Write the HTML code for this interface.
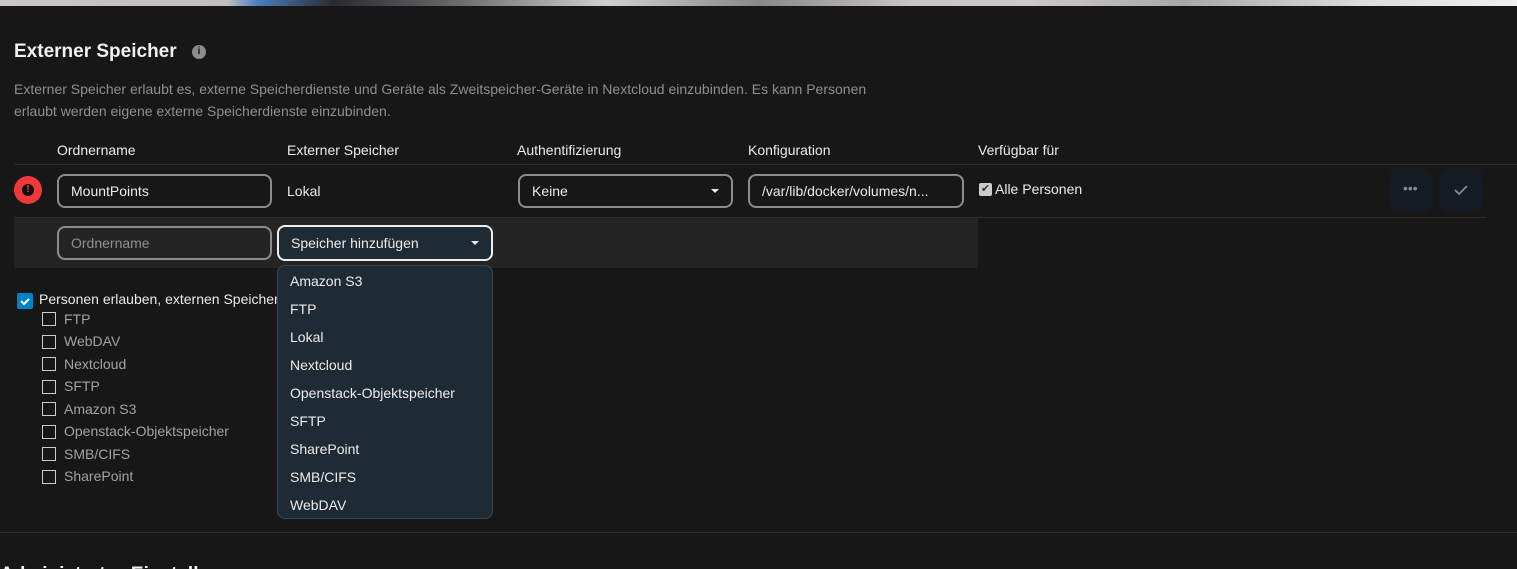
<!DOCTYPE html>
<html><head><meta charset="utf-8"><style>
*{box-sizing:border-box;margin:0;padding:0}
html,body{width:1517px;height:569px;overflow:hidden}
body{background:#171717;font-family:"Liberation Sans",sans-serif;color:#ebebeb;position:relative;font-size:14px}
.a{position:absolute;white-space:nowrap}
.top{left:0;top:0;width:1517px;height:6px;background:linear-gradient(90deg,#c8c6c6 0%,#c0bebe 15%,#4a7fc0 17%,#2a2a2e 22%,#6a6868 30%,#d0d0d0 40%,#888 50%,#c8c4c4 60%,#ccc8c8 68%,#a8a8a8 78%,#dcdcdc 90%,#f0f0f0 100%)}
.inp{position:absolute;height:34px;border:2px solid #8c8c8c;border-radius:8px;padding:0 12px;line-height:30px;font-size:14px;color:#ebebeb}
.caret{position:absolute;right:12px;top:13px;width:0;height:0;border-left:4px solid transparent;border-right:4px solid transparent;border-top:4px solid #ebebeb}
.hd{top:142px;font-size:14px;color:#ebebeb}
.cb{position:absolute;width:14px;height:14px;border:1px solid #ccc;left:42px}
.cl{position:absolute;left:64px;color:#a3a3a3;font-size:14px}
.dd{position:absolute;left:277px;top:265px;width:216px;height:254px;background:#1f2b34;border:1px solid #3a4650;border-radius:8px}
.dd div{position:absolute;left:12px;font-size:14px;color:#ebebeb}
.btn{position:absolute;top:168px;width:44px;height:44px;background:#141b22;border-radius:10px}
</style></head><body>
<div class="a top"></div>
<div class="a" style="left:14px;top:41px;font-size:19px;font-weight:bold;color:#f0f0f0">Externer Speicher</div>
<div class="a" style="left:192px;top:45px;width:14px;height:14px;border-radius:50%;background:#8c8c8c;color:#171717;font-size:10px;font-weight:bold;text-align:center;line-height:14px">i</div>
<div class="a" style="left:14px;top:78px;color:#8f8f8f;line-height:22px;font-size:14px;white-space:normal;width:880px">Externer Speicher erlaubt es, externe Speicherdienste und Geräte als Zweitspeicher-Geräte in Nextcloud einzubinden. Es kann Personen erlaubt werden eigene externe Speicherdienste einzubinden.</div>
<div class="a hd" style="left:57px">Ordnername</div>
<div class="a hd" style="left:287px">Externer Speicher</div>
<div class="a hd" style="left:517px">Authentifizierung</div>
<div class="a hd" style="left:748px">Konfiguration</div>
<div class="a hd" style="left:978px">Verfügbar für</div>
<div class="a" style="left:14px;top:164px;width:1503px;height:1px;background:#2e2e2e"></div>
<div class="a" style="left:14px;top:176px;width:28px;height:28px;border-radius:50%;background:#f0383b"></div>
<div class="a" style="left:22px;top:184px;width:12px;height:12px;border-radius:50%;background:#111;color:#f0383b;font-size:10px;font-weight:bold;text-align:center;line-height:12px">!</div>
<div class="inp" style="left:57px;top:174px;width:215px">MountPoints</div>
<div class="a" style="left:287px;top:183px">Lokal</div>
<div class="inp" style="left:518px;top:174px;width:215px">Keine<span class="caret"></span></div>
<div class="inp" style="left:748px;top:174px;width:216px">/var/lib/docker/volumes/n...</div>
<div class="a" style="left:979px;top:183px;width:13px;height:13px;background:#ccc;border-radius:2px;color:#333;font-size:11px;line-height:13px;text-align:center">✔</div>
<div class="a" style="left:995px;top:181px">Alle Personen</div>
<div class="btn" style="left:1389px"><span class="a" style="left:14px;top:12px;color:#8a8a8a;font-size:14px">•••</span></div>
<div class="btn" style="left:1439px"><svg class="a" style="left:14px;top:15px" width="16" height="14"><path d="M2 7l4 4 8-8" stroke="#8a8a8a" stroke-width="1.8" fill="none"/></svg></div>
<div class="a" style="left:14px;top:217px;width:1472px;height:1px;background:#2e2e2e"></div>
<div class="a" style="left:14px;top:218px;width:964px;height:50px;background:#242424"></div>
<div class="inp" style="left:57px;top:226px;width:215px;color:#8f8f8f">Ordnername</div>
<div class="inp" style="left:277px;top:225px;width:216px;height:36px;background:#1f2b34;border-color:#eee;line-height:32px">Speicher hinzufügen<span class="caret" style="top:14px"></span></div>
<div class="a" style="left:17px;top:293px;width:16px;height:16px;background:#0082c9;border-radius:2px"><svg width="16" height="16"><path d="M4 8l3 3 5-5" stroke="#fff" stroke-width="2" fill="none"/></svg></div>
<div class="a" style="left:39px;top:291px;width:238px;overflow:hidden">Personen erlauben, externen Speicher einzubinden</div>
<div class="cb" style="top:312px"></div><div class="cl a" style="top:311px">FTP</div>
<div class="cb" style="top:335px"></div><div class="cl a" style="top:333px">WebDAV</div>
<div class="cb" style="top:357px"></div><div class="cl a" style="top:356px">Nextcloud</div>
<div class="cb" style="top:380px"></div><div class="cl a" style="top:378px">SFTP</div>
<div class="cb" style="top:402px"></div><div class="cl a" style="top:401px">Amazon S3</div>
<div class="cb" style="top:425px"></div><div class="cl a" style="top:423px">Openstack-Objektspeicher</div>
<div class="cb" style="top:447px"></div><div class="cl a" style="top:446px">SMB/CIFS</div>
<div class="cb" style="top:470px"></div><div class="cl a" style="top:468px">SharePoint</div>
<div class="dd">
<div style="top:7px">Amazon S3</div>
<div style="top:35px">FTP</div>
<div style="top:63px">Lokal</div>
<div style="top:91px">Nextcloud</div>
<div style="top:119px">Openstack-Objektspeicher</div>
<div style="top:147px">SFTP</div>
<div style="top:175px">SharePoint</div>
<div style="top:203px">SMB/CIFS</div>
<div style="top:231px">WebDAV</div>
</div>
<div class="a" style="left:0;top:532px;width:1517px;height:1px;background:#2e2e2e"></div>
<div class="a" style="left:0;top:564px;font-size:19px;font-weight:bold;color:#f0f0f0;line-height:22px">Administrator-Einstellungen</div>
</body></html>
